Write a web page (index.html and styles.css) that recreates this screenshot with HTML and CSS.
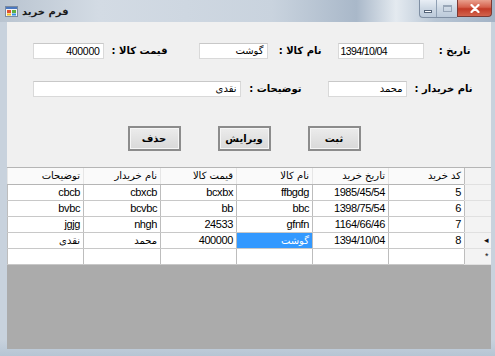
FILE: index.html
```html
<!DOCTYPE html>
<html lang="fa">
<head>
<meta charset="utf-8">
<title>فرم خرید</title>
<link rel="stylesheet" href="styles.css">
</head>
<body>
<div class="window">
  <div class="titlebar">
    <div class="title-left">
      <svg class="app-icon" width="13" height="11" viewBox="0 0 13 11">
        <rect x="0.5" y="0.5" width="12" height="10" fill="#f4f4f4" stroke="#7a8aa0"/>
        <rect x="1" y="1" width="11" height="2" fill="#4a78c0"/>
        <rect x="2" y="4" width="4" height="3" fill="#e05030"/>
        <rect x="7" y="4" width="4" height="3" fill="#60b040"/>
        <rect x="2" y="7.5" width="4" height="2" fill="#f0c020"/>
        <rect x="7" y="7.5" width="4" height="2" fill="#3090e0"/>
      </svg>
      <span class="title">فرم خرید</span>
    </div>
    <div class="controls">
      <div class="ctl-group">
        <div class="ctl min"><span></span></div>
        <div class="ctl max"><span></span></div>
      </div>
      <div class="ctl close">
        <svg width="10" height="9" viewBox="0 0 10 9"><path d="M1.5 1 L8.5 8 M8.5 1 L1.5 8" stroke="#fff" stroke-width="2.2" stroke-linecap="round"/></svg>
      </div>
    </div>
  </div>
  <div class="body">
    <div class="client">
      <div class="form">
        <div class="row row1">
          <div class="lbl w47">تاریخ :</div>
          <div class="tb w86 ltr">1394/10/04</div>
          <div class="lbl w70">نام کالا :</div>
          <div class="tb w69">گوشت</div>
          <div class="lbl w95">قیمت کالا :</div>
          <div class="tb w71">400000</div>
        </div>
        <div class="row row2">
          <div class="lbl w66">نام خریدار :</div>
          <div class="tb w79">محمد</div>
          <div class="lbl w87">توضیحات :</div>
          <div class="tb w208">نقدی</div>
        </div>
        <div class="row buttons">
          <div class="btn">ثبت</div>
          <div class="btn">ویرایش</div>
          <div class="btn">حذف</div>
        </div>
      </div>
      <div class="grid">
        <table>
          <colgroup>
            <col class="c-rh"><col class="c76"><col class="c76"><col class="c76"><col class="c76"><col class="c77"><col class="c76">
          </colgroup>
          <thead>
            <tr>
              <th class="rh"></th>
              <th>کد خرید</th>
              <th>تاریخ خرید</th>
              <th>نام کالا</th>
              <th>قیمت کالا</th>
              <th>نام خریدار</th>
              <th>توضیحات</th>
            </tr>
          </thead>
          <tbody>
            <tr><td class="rh"></td><td>5</td><td>1985/45/54</td><td>ffbgdg</td><td>bcxbx</td><td>cbxcb</td><td>cbcb</td></tr>
            <tr><td class="rh"></td><td>6</td><td>1398/75/54</td><td>bbc</td><td>bb</td><td>bcvbc</td><td>bvbc</td></tr>
            <tr><td class="rh"></td><td>7</td><td>1164/66/46</td><td>gfnfn</td><td>24533</td><td>nhgh</td><td>jgjg</td></tr>
            <tr><td class="rh ind">◂</td><td>8</td><td>1394/10/04</td><td class="sel">گوشت</td><td>400000</td><td class="fa">محمد</td><td class="fa">نقدی</td></tr>
            <tr><td class="rh ind star">*</td><td></td><td></td><td></td><td></td><td></td><td></td></tr>
          </tbody>
        </table>
        <div class="grid-bg"></div>
      </div>
    </div>
  </div>
</div>
</body>
</html>
```

FILE: styles.css
```css
* { box-sizing: border-box; }
html, body { margin: 0; padding: 0; }
body {
  width: 495px;
  height: 356px;
  overflow: hidden;
  font-family: "DejaVu Sans", "Liberation Sans", sans-serif;
  background: #fff;
}
.window {
  width: 495px;
  height: 356px;
  display: flex;
  flex-direction: column;
  background: linear-gradient(90deg, #9aa6b3 0%, #c9d3de 2%, #cfd8e2 40%, #c2cedb 100%);
}
.titlebar {
  height: 22px;
  flex: none;
  display: flex;
  justify-content: space-between;
  align-items: flex-start;
  background: linear-gradient(90deg, #b9c4d0 0%, #d3dbe4 20%, #c9d3de 55%, #a9b8c9 72%, #e4eaf0 80%, #b7c5d4 88%, #a3b3c6 100%);
}
.title-left {
  display: flex;
  align-items: center;
  padding: 6px 0 0 5px;
  gap: 4px;
}
.app-icon { display: block; }
.title {
  direction: rtl;
  font-size: 10px;
  font-weight: bold;
  color: #1a1a1a;
  line-height: 11px;
}
.controls {
  display: flex;
  margin-right: 3px;
}
.ctl-group {
  display: flex;
  border: 1px solid #7f8fa3;
  border-top: none;
  border-right: none;
  border-radius: 0 0 0 4px;
  background: linear-gradient(180deg, #e8eef5 0%, #cdd8e4 50%, #bccada 100%);
}
.ctl {
  height: 17px;
  display: flex;
  align-items: center;
  justify-content: center;
}
.ctl.min { width: 17px; border-right: 1px solid #8fa0b4; }
.ctl.max { width: 20px; }
.ctl.min span {
  width: 8px;
  height: 3px;
  margin-top: 5px;
  background: #fff;
  border: 1px solid #55657a;
}
.ctl.max span {
  width: 9px;
  height: 7px;
  border: 1px solid #8998ab;
  border-top-width: 2px;
  opacity: 0.8;
}
.ctl.close {
  width: 35px;
  border: 1px solid #7c3a34;
  border-top: none;
  border-radius: 0 0 4px 0;
  background: linear-gradient(180deg, #e9a08e 0%, #d5604c 45%, #c23a26 55%, #d2634d 100%);
}
.body {
  flex: 1;
  display: flex;
  padding: 0 5px 7px 7px;
  background: linear-gradient(180deg, #c8d2dd 0%, #c8d2dd 95%, #b6c5d4 100%);
}
.client {
  flex: 1;
  display: flex;
  flex-direction: column;
  direction: rtl;
  background: #f0f0f0;
}
.form {
  height: 145px;
  flex: none;
  padding-top: 21px;
}
.row {
  display: flex;
  align-items: center;
}
.row1 { padding-right: 20px; height: 16px; }
.row2 { padding-right: 18px; height: 16px; margin-top: 22px; }
.buttons { padding-right: 130px; margin-top: 29px; height: 25px; gap: 37px; }
.lbl {
  font-size: 10px;
  font-weight: bold;
  color: #000;
  line-height: 16px;
  white-space: nowrap;
  flex: none;
}
.w47 { width: 47px; }
.w70 { width: 70px; padding-right: 16px; }
.w95 { width: 95px; padding-right: 31px; }
.w66 { width: 66px; }
.w87 { width: 87px; padding-right: 26px; }
.tb {
  flex: none;
  height: 16px;
  background: #fff;
  border: 1px solid #d9d9d9;
  border-top-color: #c8c8c8;
  font-size: 10px;
  line-height: 14px;
  padding: 0 3px;
  color: #000;
  font-family: "DejaVu Sans", "Liberation Sans", sans-serif;
  white-space: nowrap;
  overflow: hidden;
}
.tb.ltr { direction: ltr; text-align: left; padding-left: 2px; font-family: "Liberation Sans", sans-serif; font-size: 10.5px; letter-spacing: -0.6px; }
.w86 { width: 86px; }
.w69 { width: 69px; }
.w71 { width: 71px; font-family: "Liberation Sans", sans-serif; font-size: 10.5px; letter-spacing: -0.3px; }
.w79 { width: 79px; }
.w208 { width: 208px; }
.btn {
  flex: none;
  width: 53px;
  height: 25px;
  border: 2px solid #8c8c8c;
  background: linear-gradient(180deg, #ececec 0%, #e2e2e2 50%, #d9d9d9 100%);
  box-shadow: inset 0 0 0 1px #f6f6f6;
  font-size: 10px;
  font-weight: bold;
  display: flex;
  align-items: center;
  justify-content: center;
  color: #000;
}
.grid {
  flex: 1;
  display: flex;
  flex-direction: column;
  border-top: 1px solid #b5b5b5;
  background: #ababab;
}
table {
  width: 483px;
  table-layout: fixed;
  border-collapse: collapse;
  background: #fff;
  direction: rtl;
}
.c-rh { width: 26px; }
.c76 { width: 76px; }
.c77 { width: 77px; }
th, td {
  height: 16px;
  padding: 0 3px 0 2px;
  text-align: right;
  white-space: nowrap;
  overflow: hidden;
  font-size: 10px;
  line-height: 15px;
  color: #000;
  border-left: 1px solid #bdbdbd;
  border-bottom: 1px solid #c8c8c8;
}
th {
  font-weight: normal;
  font-family: "DejaVu Sans", sans-serif;
  background: #fafafa;
  border-bottom: 1px solid #b5b5b5;
  border-left-color: #e6e6e6;
}
td { font-family: "Liberation Sans", "DejaVu Sans", sans-serif; font-size: 11px; letter-spacing: -0.4px; }
td.fa { font-family: "DejaVu Sans", sans-serif; font-size: 10px; letter-spacing: 0; }
td.rh, th.rh { background: #f3f3f3; border-left: 1px solid #bdbdbd; border-bottom-color: #e0e0e0; }
td.ind { font-size: 9px; padding-right: 2px; color: #111; letter-spacing: 0; }
td.star { font-size: 9px; line-height: 14px; }
td.sel { background: #3399ff; color: #fff; font-family: "DejaVu Sans", sans-serif; font-size: 10px; letter-spacing: 0; }
.grid-bg { flex: 1; }
```
